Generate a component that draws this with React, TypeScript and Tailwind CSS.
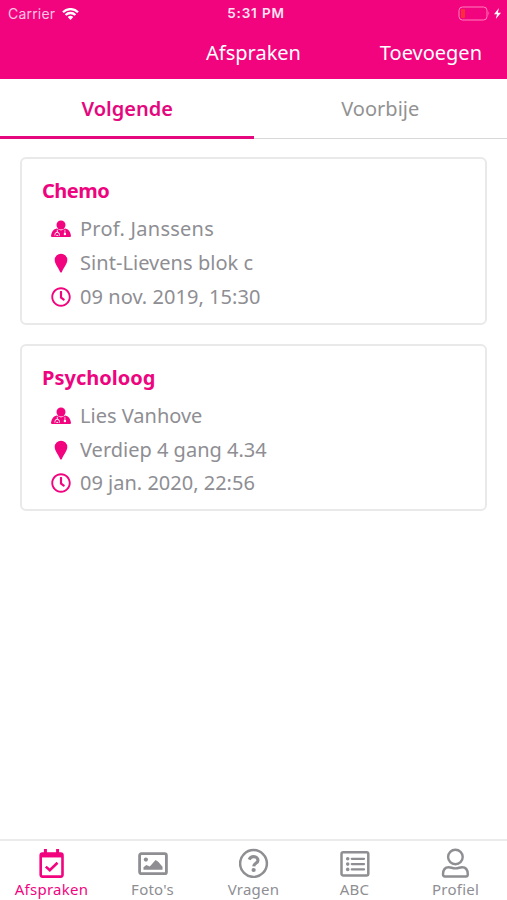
import type { ReactNode } from "react"
import { FaRegClock } from "react-icons/fa"

type IconProps = { className?: string }

function DoctorIcon({ className }: IconProps) {
  return (
    <svg viewBox="0 0 20 20" className={className}>
      <circle cx="10" cy="6" r="4.5" fill="currentColor" />
      <path
        d="M5.8 9.6 10 11.500l4.200-1.900c3.400.7 5.100 3 5.700 6.600.2 1.200-.2 1.800-1.200 1.800H1.300C.3 18-.1 17.400.1 16.200.7 12.600 2.400 10.300 5.800 9.600z"
        fill="currentColor"
      />
      <path d="M6.300 10.800v2.500M3.900 16.600v-1a2.300 2.300 0 0 1 4.600 0v1M5.300 16.400h2" fill="none" stroke="white" strokeWidth="0.9" />
      <path d="M13.900 10.800V14" fill="none" stroke="white" strokeWidth="0.7" />
      <circle cx="13.900" cy="15" r="1.200" fill="white" />
    </svg>
  )
}

function PinIcon({ className }: IconProps) {
  return (
    <svg viewBox="0 0 20 20" className={className}>
      <path
        d="M10 .7a6.300 6.300 0 0 1 6.300 6.300c0 3.800-4 8.300-5.400 12q-.9 1.200-1.800 0C7.700 15.300 3.700 10.800 3.700 7A6.300 6.300 0 0 1 10 .7z"
        fill="currentColor"
      />
    </svg>
  )
}

function CalendarIcon({ className }: IconProps) {
  return (
    <svg viewBox="0 0 30 30" className={className} fill="none" stroke="currentColor">
      <path d="M8.400 1v4M20.600 1v4" strokeWidth="3" />
      <rect x="3.700" y="5.600" width="21.800" height="23" rx="1.800" strokeWidth="2.600" />
      <path d="M3.500 7.200h22" strokeWidth="4.500" />
      <path d="m8.800 18.600 4 3.700 7.700-7.500" strokeWidth="2.600" />
    </svg>
  )
}

function PhotoIcon({ className }: IconProps) {
  return (
    <svg viewBox="0 0 30 30" className={className}>
      <rect x="1.600" y="5.700" width="26.800" height="20" rx="1.800" fill="none" stroke="currentColor" strokeWidth="2.800" />
      <circle cx="7.900" cy="11.600" r="2.100" fill="currentColor" />
      <path d="M5.500 21.800v-2.600l2.800-2.200 3.500 1.600 5.800-6.600 2.600 1.800 4.300 5v3z" fill="currentColor" />
    </svg>
  )
}

function QuestionIcon({ className }: IconProps) {
  return (
    <svg viewBox="0 0 30 30" className={className} fill="none" stroke="currentColor">
      <circle cx="14.500" cy="15.500" r="13.400" strokeWidth="2.500" />
      <path d="M10.200 11.600c.8-2 2.300-3 4.400-3 2.500 0 4.400 1.500 4.400 3.600 0 3.200-4.200 3-4.300 6.200" strokeWidth="3.100" />
      <circle cx="14.600" cy="22" r="2.100" fill="currentColor" stroke="none" />
    </svg>
  )
}

function ListIcon({ className }: IconProps) {
  return (
    <svg viewBox="0 0 30 30" className={className} fill="none" stroke="currentColor">
      <rect x="1.500" y="4.300" width="26.800" height="23.200" rx="1.800" strokeWidth="2.500" />
      <path d="M11.800 10.800H24M11.800 16.100H24M11.800 21.400H24" strokeWidth="2.300" strokeLinecap="round" />
      <g fill="currentColor" stroke="none">
        <circle cx="7.700" cy="10.800" r="1.800" />
        <circle cx="7.700" cy="16.100" r="1.800" />
        <circle cx="7.700" cy="21.400" r="1.800" />
      </g>
    </svg>
  )
}

function ProfileIcon({ className }: IconProps) {
  return (
    <svg viewBox="0 0 30 30" className={className} fill="none" stroke="currentColor" strokeWidth="2.400">
      <circle cx="14.400" cy="9" r="7.300" />
      <path
        d="M7.700 19.200c2.500 0 3.500 1.200 6.700 1.200s4.200-1.200 6.700-1.200c3.600 0 5.600 2.700 5.700 7 0 1.500-.6 2.300-2 2.300H4c-1.400 0-2-.8-2-2.300.1-4.300 2.100-7 5.700-7z"
        strokeLinejoin="round"
      />
    </svg>
  )
}

type Icon = (props: IconProps) => ReactNode

const lineIcons: Icon[] = [DoctorIcon, PinIcon, FaRegClock]

const appointments = [
  {
    title: "Chemo",
    tracking: "tracking-[-0.5px]",
    lines: [
      { text: "Prof. Janssens", tracking: "tracking-[0.25px]" },
      { text: "Sint-Lievens blok c", tracking: "tracking-[0.05px]" },
      { text: "09 nov. 2019, 15:30", tracking: "tracking-[0.05px]" },
    ],
  },
  {
    title: "Psycholoog",
    tracking: "tracking-normal",
    lines: [
      { text: "Lies Vanhove", tracking: "tracking-normal" },
      { text: "Verdiep 4 gang 4.34", tracking: "tracking-normal" },
      { text: "09 jan. 2020, 22:56", tracking: "tracking-normal" },
    ],
  },
]

const navItems: { icon: Icon; label: string; active?: boolean }[] = [
  { icon: CalendarIcon, label: "Afspraken", active: true },
  { icon: PhotoIcon, label: "Foto's" },
  { icon: QuestionIcon, label: "Vragen" },
  { icon: ListIcon, label: "ABC" },
  { icon: ProfileIcon, label: "Profiel" },
]

function StatusBar() {
  return (
    <div className="grid h-[27px] grid-cols-3 items-center pl-2 pr-[5px] font-['Inter',sans-serif] text-[14px] leading-none text-white">
      <div className="flex items-center gap-[7px] text-[#ffc4e4]">
        <span className="tracking-[0.2px]">Carrier</span>
        <svg width="17" height="12" viewBox="0 0 17 12" className="text-white">
          <path d="M1 4.200a10.600 10.600 0 0 1 15 0M3.600 7a7 7 0 0 1 9.800 0" fill="none" stroke="currentColor" strokeWidth="2.300" />
          <path d="M8.500 12 5.700 9.100a4 4 0 0 1 5.600 0z" fill="currentColor" />
        </svg>
      </div>
      <span className="pl-[2px] pt-px text-center text-[13.5px] font-semibold tracking-[0.85px] text-[#ffe3f2]">5:31 PM</span>
      <div className="flex items-center justify-end">
        <svg width="44" height="15" viewBox="0 0 44 15">
          <rect x="1" y="1" width="28" height="13" rx="3.500" fill="none" stroke="#ff80bd" strokeWidth="1" />
          <rect x="3" y="3" width="4" height="9" rx="1" fill="#fb2c3c" />
          <path d="M30.500 5.300q1.800 2.200 0 4.400z" fill="#ff80bd" />
          <path d="M41 2 36 8.300h3L37.800 13 43 6.700h-3.200z" fill="white" />
        </svg>
      </div>
    </div>
  )
}

export default function App() {
  return (
    <div className="flex h-[900px] w-[507px] flex-col overflow-hidden bg-white font-['Noto_Sans',sans-serif] text-[#8e8e93]">
      <header className="h-[79px] bg-[#f2047f] text-white">
        <StatusBar />
        <div className="grid h-[52px] grid-cols-3 items-center text-[20px] leading-none">
          <span className="col-start-2 text-center">Afspraken</span>
          <span className="pr-[25px] text-right">Toevoegen</span>
        </div>
      </header>

      <div className="grid h-[59px] grid-cols-2 pt-[2px] text-center text-[20px] leading-[54px]">
        <div className="border-b-[3px] border-[#e5077e] pl-px pt-px font-semibold text-[#e5077e]">Volgende</div>
        <div className="border-b border-[#d8d8d8] pt-px text-[#929292]">Voorbije</div>
      </div>

      <main className="flex flex-1 flex-col gap-[19px] px-5 pt-[19px]">
        {appointments.map((item) => (
          <section key={item.title} className="h-[167.5px] rounded-md border-2 border-[#e9e9e9] px-5 pt-[17px]">
            <h2 className={`text-[20px] font-bold leading-[30px] text-[#ed047e] ${item.tracking}`}>{item.title}</h2>
            <ul className="pt-[6.5px]">
              {item.lines.map((line, i) => {
                const LineIcon = lineIcons[i]
                return (
                  <li key={line.text} className="flex h-[33.75px] items-center text-[20px]">
                    <span className="flex w-[38px] pl-[9px]">
                      <LineIcon className="h-5 w-5 text-[#f2047f]" />
                    </span>
                    <span className={line.tracking}>{line.text}</span>
                  </li>
                )
              })}
            </ul>
          </section>
        ))}
      </main>

      <nav className="grid h-[61px] grid-cols-5 border-t-2 border-[#ebebeb] px-px pt-[7px]">
        {navItems.map((item) => (
          <div
            key={item.label}
            className={`flex flex-col items-center ${item.active ? "text-[#f2047f]" : "text-[#8e8e93]"}`}
          >
            <item.icon className="h-[30px] w-[30px]" />
            <span className="pt-[2px] text-[15px] leading-[18px] tracking-[0.25px]">{item.label}</span>
          </div>
        ))}
      </nav>
    </div>
  )
}
